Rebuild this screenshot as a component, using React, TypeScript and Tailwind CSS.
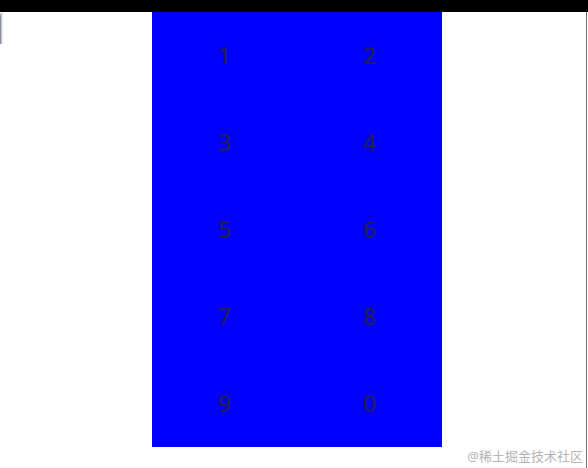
export default function App() {
  const keys = ['1', '2', '3', '4', '5', '6', '7', '8', '9', '0']
  return (
    <div className="relative h-[468px] w-[588px] overflow-hidden bg-white" style={{ fontFamily: '"Noto Sans", sans-serif' }}>
      {/* top bar */}
      <div className="h-3 bg-black" />

      {/* keypad */}
      <div className="ml-[152px] grid h-[435px] w-[290px] grid-cols-2 grid-rows-5 bg-[#0000ff]">
        {keys.map((k) => (
          <div key={k} className="flex items-center justify-center text-[23px] font-medium text-[#211d5c]">
            {k}
          </div>
        ))}
      </div>

      {/* edge shadows */}
      <div className="absolute left-0 top-3 h-8 w-[4px] rounded-tl-[6px] bg-gradient-to-r from-gray-500 via-gray-200 to-white" />
      <div className="absolute right-[1px] top-3 h-[456px] w-[1px] bg-[#707070]" />

      {/* watermark */}
      <div
        className="absolute bottom-[2px] right-[5px] text-[13px] text-[#b4b4b4]"
        style={{ fontFamily: '"Noto Sans", "Noto Sans CJK SC", sans-serif' }}
      >
        @稀土掘金技术社区
      </div>
    </div>
  )
}
